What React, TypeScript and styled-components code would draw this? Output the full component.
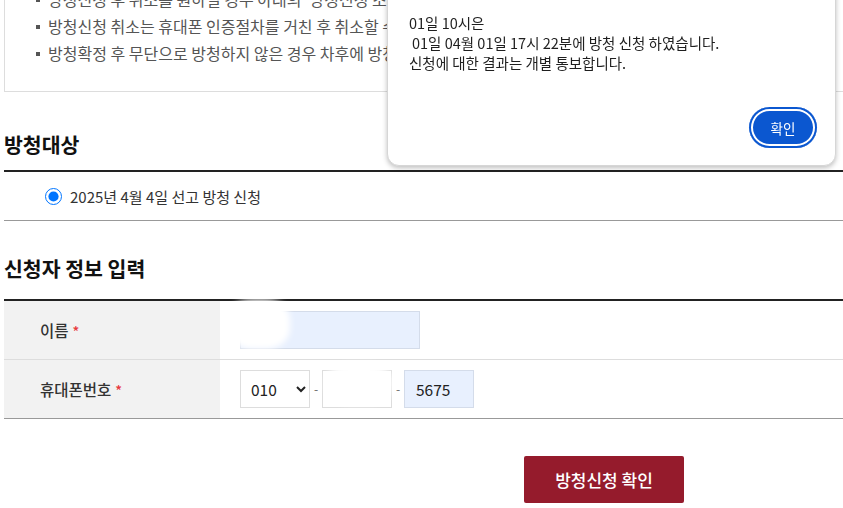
import React from 'react';
import styled, { createGlobalStyle } from 'styled-components';

const GlobalStyle = createGlobalStyle`
  html, body {
    margin: 0;
    padding: 0;
    background: #fff;
    overflow: hidden;
  }
  body {
    font-family: "Noto Sans CJK KR", "Noto Sans", sans-serif;
    color: #333;
  }
`;

const notices = [
  "방청신청 후 취소를 원하실 경우 아래의 '방청신청 조회/취소' 메뉴에서 취소 가능합니다.",
  '방청신청 취소는 휴대폰 인증절차를 거친 후 취소할 수 있습니다.',
  '방청확정 후 무단으로 방청하지 않은 경우 차후에 방청신청이 제한될 수 있습니다.',
];

export default function App() {
  return (
    <>
      <GlobalStyle />
      <Page>
        <NoticeBox>
          <NoticeList>
            {notices.map((text) => (
              <li key={text}>{text}</li>
            ))}
          </NoticeList>
        </NoticeBox>

        <SectionTitle $top={38} $bottom={12}>
          방청대상
        </SectionTitle>
        <TargetBox>
          <RadioLabel>
            <input type="radio" name="target" defaultChecked />
            2025년 4월 4일 선고 방청 신청
          </RadioLabel>
        </TargetBox>

        <SectionTitle $top={33} $bottom={17}>
          신청자 정보 입력
        </SectionTitle>
        <FormTable>
          <tbody>
            <tr>
              <th>
                이름<Required>*</Required>
              </th>
              <td>
                <Redacted>
                  <TextInput $autofill $width={180} defaultValue="" />
                  <Blur />
                </Redacted>
              </td>
            </tr>
            <tr>
              <th>
                휴대폰번호<Required>*</Required>
              </th>
              <td>
                <PhoneRow>
                  <PhoneSelect defaultValue="010">
                    <option value="010">010</option>
                    <option value="011">011</option>
                    <option value="016">016</option>
                  </PhoneSelect>
                  <Dash>-</Dash>
                  <Redacted>
                    <TextInput $width={70} defaultValue="" />
                    <Blur $soft />
                  </Redacted>
                  <Dash>-</Dash>
                  <TextInput $autofill $width={70} defaultValue="5675" />
                </PhoneRow>
              </td>
            </tr>
          </tbody>
        </FormTable>

        <ButtonRow>
          <SubmitButton type="button">방청신청 확인</SubmitButton>
        </ButtonRow>
      </Page>

      <AlertDialog role="alertdialog">
        <AlertText>
          <p>01일 10시은</p>
          <p className="shifted">01일 04월 01일 17시 22분에 방청 신청 하였습니다.</p>
          <p>신청에 대한 결과는 개별 통보합니다.</p>
        </AlertText>
        <AlertFooter>
          <AlertButton type="button">확인</AlertButton>
        </AlertFooter>
      </AlertDialog>
    </>
  );
}

/* 페이지는 위로 스크롤된 상태 */
const Page = styled.div`
  width: 1200px;
  margin: -40px 0 0 4px;
`;

const NoticeBox = styled.div`
  border: 1px solid #ddd;
  padding: 25px 0 24px;
`;

const NoticeList = styled.ul`
  margin: 0;
  padding: 0 0 0 43px;
  list-style: none;

  li {
    position: relative;
    font-size: 16px;
    line-height: 27px;
    color: #555;
    white-space: nowrap;
  }

  li::before {
    content: '';
    position: absolute;
    left: -12px;
    top: 12px;
    width: 4px;
    height: 4px;
    background: #555;
  }
`;

const SectionTitle = styled.h3<{ $top: number; $bottom: number }>`
  margin: ${({ $top }) => $top}px 0 ${({ $bottom }) => $bottom}px;
  font-size: 20.5px;
  line-height: 28px;
  font-weight: 700;
  color: #111;
`;

const TargetBox = styled.div`
  display: flex;
  align-items: center;
  height: 48px;
  padding-left: 41px;
  border-top: 2px solid #222;
  border-bottom: 1px solid #999;
`;

const RadioLabel = styled.label`
  display: flex;
  align-items: center;
  gap: 8px;
  font-size: 15px;
  color: #333;

  input {
    width: 17px;
    height: 17px;
    margin: 0;
    accent-color: #0075ff;
  }
`;

const FormTable = styled.table`
  width: 100%;
  border-collapse: collapse;
  border-top: 2px solid #222;
  border-bottom: 1px solid #999;

  tr + tr {
    border-top: 1px solid #ddd;
  }

  th {
    width: 216px;
    height: 59px;
    padding: 0 0 0 36px;
    box-sizing: border-box;
    background: #f2f2f2;
    text-align: left;
    font-size: 15.5px;
    font-weight: 500;
    color: #333;
  }

  td {
    padding: 0 0 0 20px;
  }
`;

const Required = styled.span`
  margin-left: 4px;
  color: #e8383d;
  font-size: 14px;
`;

const Redacted = styled.span`
  position: relative;
  display: inline-flex;
`;

const Blur = styled.span<{ $soft?: boolean }>`
  position: absolute;
  left: ${({ $soft }) => ($soft ? '4px' : '-12px')};
  top: ${({ $soft }) => ($soft ? '-6px' : '-12px')};
  width: ${({ $soft }) => ($soft ? '66px' : '62px')};
  height: ${({ $soft }) => ($soft ? '40px' : '50px')};
  background: #fff;
  border-radius: 40%;
  filter: blur(3px);
`;

const TextInput = styled.input<{ $autofill?: boolean; $width: number }>`
  box-sizing: border-box;
  width: ${({ $width }) => $width}px;
  height: 38px;
  padding: 0 11px;
  border: 1px solid ${({ $autofill }) => ($autofill ? '#d4dcea' : '#ddd')};
  background: ${({ $autofill }) => ($autofill ? '#e8f0fe' : '#fff')};
  font-family: inherit;
  font-size: 15.5px;
  color: #222;
  outline: none;
`;

const PhoneRow = styled.div`
  display: flex;
  align-items: center;
`;

const PhoneSelect = styled.select`
  box-sizing: border-box;
  width: 70px;
  height: 38px;
  padding: 0 4px 0 6px;
  border: 1px solid #ddd;
  border-radius: 0;
  background: #fff;
  font-family: inherit;
  font-size: 15.5px;
  color: #222;
`;

const Dash = styled.span`
  width: 12px;
  text-align: center;
  font-size: 12px;
  color: #666;
`;

const ButtonRow = styled.div`
  display: flex;
  justify-content: center;
  margin-top: 37px;
`;

const SubmitButton = styled.button`
  width: 160px;
  height: 47px;
  border: 0;
  border-radius: 2px;
  background: #951b2c;
  color: #fff;
  font-family: inherit;
  font-size: 17px;
  font-weight: 500;
  cursor: pointer;
`;

const AlertDialog = styled.div`
  position: fixed;
  left: 387px;
  top: -40px;
  width: 449px;
  height: 206px;
  box-sizing: border-box;
  display: flex;
  flex-direction: column;
  justify-content: space-between;
  padding: 52px 18px 17px 21px;
  background: #fff;
  border: 1px solid #d6d6d6;
  border-radius: 12px;
  box-shadow: 0 2px 5px rgba(0, 0, 0, 0.25);
`;

const AlertText = styled.div`
  font-size: 14.5px;
  line-height: 20px;
  color: #1f1f1f;

  p {
    margin: 0;
    white-space: nowrap;
  }

  .shifted {
    margin-left: 3px;
  }
`;

const AlertFooter = styled.div`
  display: flex;
  justify-content: flex-end;
`;

const AlertButton = styled.button`
  width: 68px;
  height: 41px;
  border: 0;
  border-radius: 21px;
  background: #0b57d0;
  box-shadow: inset 0 0 0 2px #0b57d0, inset 0 0 0 4px #fff;
  color: #fff;
  font-family: inherit;
  font-size: 13.5px;
  cursor: pointer;
`;
